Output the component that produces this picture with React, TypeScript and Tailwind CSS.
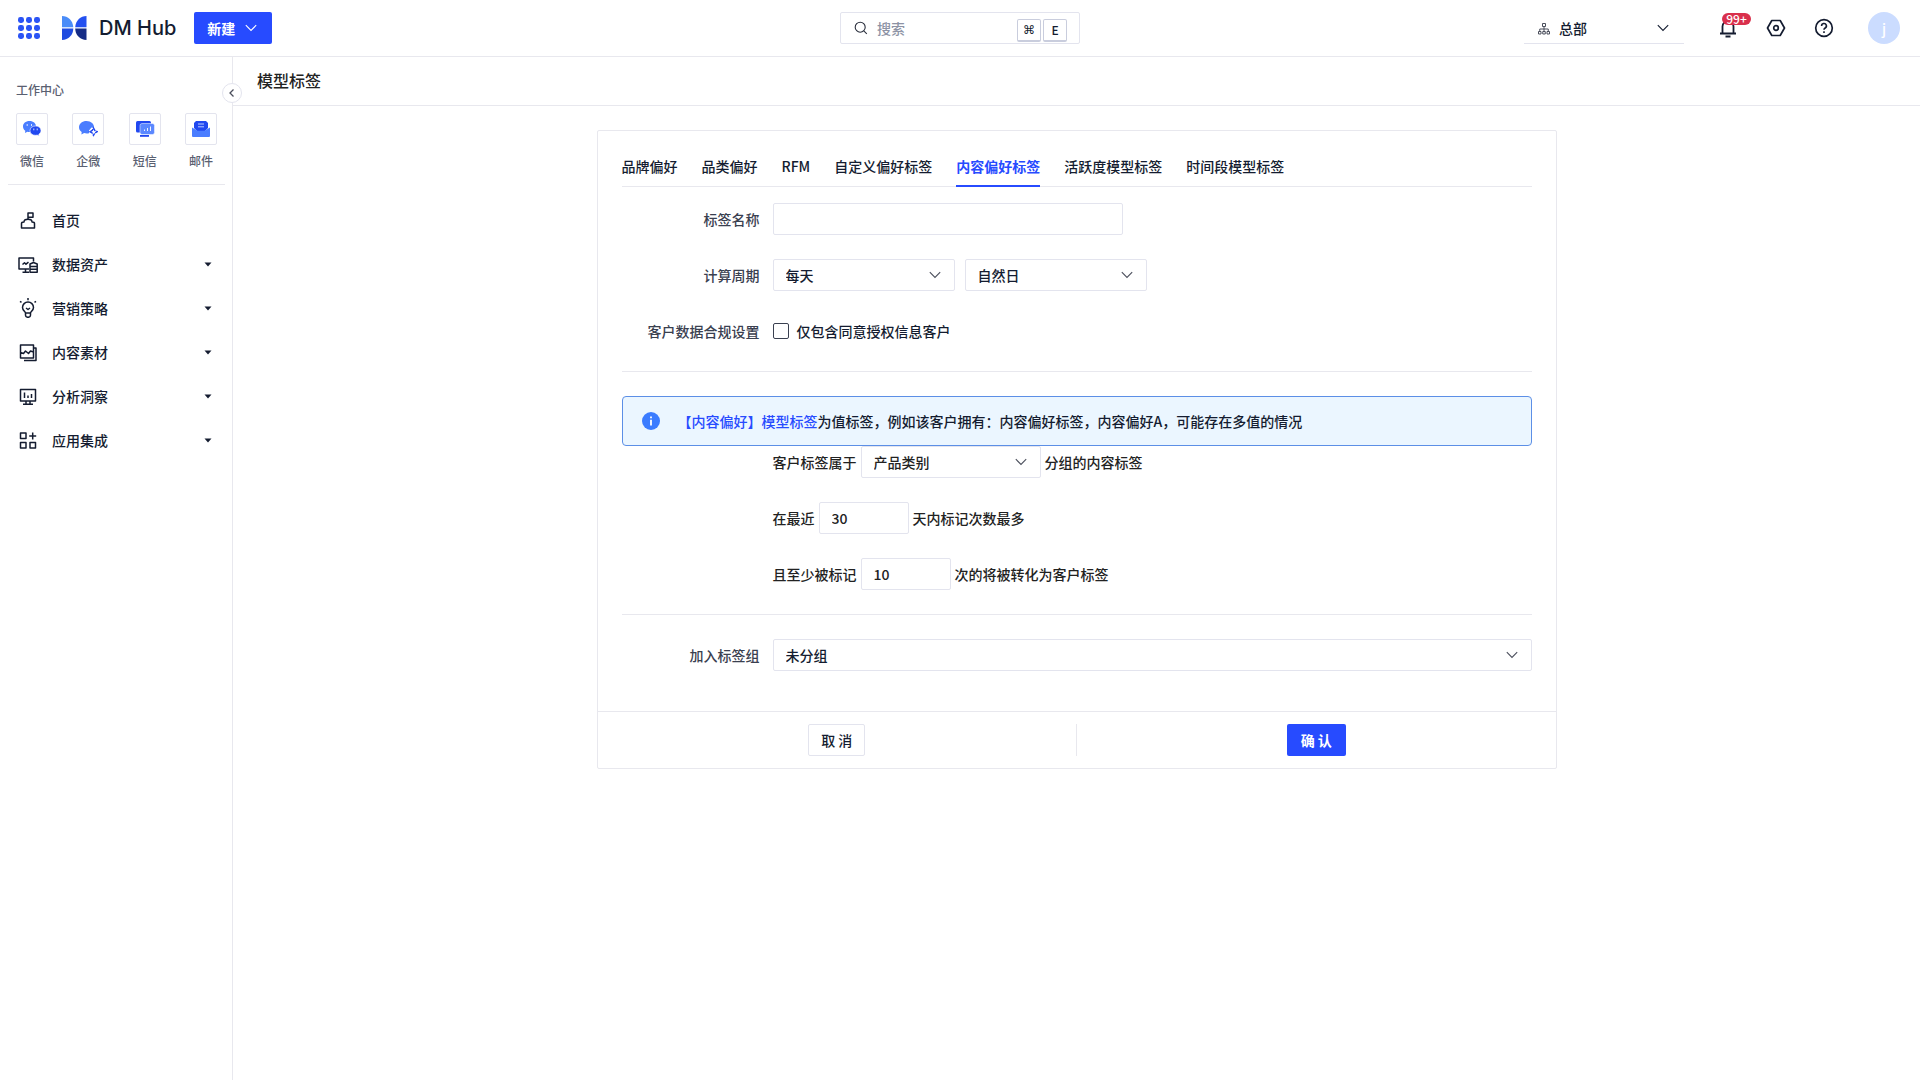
import React, { FC, ReactNode } from 'react';

type IconProps = {
	className?: string;
};

type ChildrenProps = {
	children: ReactNode;
};

type SelectBoxProps = {
	id: string;
	label?: string;
	options: string[];
	className: string;
};

type FormRowProps = {
	label?: string;
	htmlFor?: string;
	children: ReactNode;
};

type NavEntry = {
	label: string;
	icon: ReactNode;
	expandable: boolean;
};

const Chevron: FC<IconProps> = ({ className = '' }) => (
	<svg
		className={className}
		width="12"
		height="12"
		viewBox="0 0 12 12"
		fill="none"
		stroke="currentColor"
		strokeWidth="1.1"
	>
		<path d="M0.8 3.2 6 8.4l5.2-5.2" />
	</svg>
);

const LineIcon: FC<ChildrenProps> = ({ children }) => (
	<svg
		className="shrink-0"
		width="20"
		height="20"
		viewBox="0 0 20 20"
		fill="none"
		stroke="currentColor"
		strokeWidth="1.5"
		strokeLinejoin="round"
	>
		{children}
	</svg>
);

const GridIcon = () => (
	<svg width="24" height="24" viewBox="0 0 24 24" fill="#2b54f5">
		{[4, 12, 20].map((y) =>
			[4, 12, 20].map((x) => (
				<rect
					key={`${x}-${y}`}
					x={x - 3}
					y={y - 3}
					width="6"
					height="6"
					rx="2.4"
				/>
			))
		)}
	</svg>
);

const Logo = () => (
	<svg width="26" height="26" viewBox="0 0 26 26">
		<path d="M1 1C7 1 11.800 5.500 12.300 12.200H1z" fill="#4a8cf8" />
		<path d="M25.500 1C19.500 1 14.700 5.500 14.200 12.200H25.500z" fill="#2350f0" />
		<path d="M1 13.600H12.300C12.300 20 7.500 25 1 25z" fill="#1f4be0" />
		<path d="M25.500 13.600H14.200C14.200 20 19 25 25.500 25z" fill="#152c86" />
	</svg>
);

const navEntries: NavEntry[] = [
	{
		label: '首页',
		expandable: false,
		icon: (
			<>
				<path d="M3.500 18v-4.500c0-1 .8-1.500 2.500-1.500 0-1.800 1.500-2.700 4-2.700s4 .9 4 2.700c1.700 0 2.500.5 2.500 1.500V18z" />
				<path d="M10 9.300V3h5v4.200h-5" />
			</>
		),
	},
	{
		label: '数据资产',
		expandable: true,
		icon: (
			<>
				<path d="M11 15H1V4h14.500v3.500M4.500 18.300H11M7.500 15v3M4.500 10.500l2-1.800 1.500 1.500 2.500-2" />
				<path d="M12 10l3.500-1.500L19.200 10v8.300H12zM12 12.500h7M12 15.300h7" />
			</>
		),
	},
	{
		label: '营销策略',
		expandable: true,
		icon: (
			<>
				<path d="M7.500 15c0-1.500-3-2.500-3-5.500a5.500 5.500 0 0 1 11 0c0 3-3 4-3 5.500zM7.500 15v2.300c0 1.200 1 2 2.500 2s2.500-.8 2.500-2V15" />
				<path d="M8 10l2 1.500L12 10M10 0v2.300M2 3.300l1.500 1M18 3.300l-1.500 1" />
			</>
		),
	},
	{
		label: '内容素材',
		expandable: true,
		icon: (
			<path d="M2.500 3h13v13h-13zM6 18.500h12V6h-2.500M2.500 10.500l3 1L7.500 9l3 2.500 2-2.500 3 1" />
		),
	},
	{
		label: '分析洞察',
		expandable: true,
		icon: (
			<>
				<path d="M2.500 3.500h15V15h-15zM8 15v3M12 15v3M5 18.300h10" />
				<path d="M6.500 6.500V12M10 9.500V12M13.500 8v4" />
			</>
		),
	},
	{
		label: '应用集成',
		expandable: true,
		icon: (
			<>
				<path d="M2.500 3h5.500v5.500H2.500zM2.500 12.500h5.500V18H2.500zM12 12.500h5.500V18H12z" />
				<path d="M14.700 2.500v7M11.200 6h7" />
			</>
		),
	},
];

const shortcuts = [
	{
		label: '微信',
		icon: (
			<>
				<path
					d="M7.500 2C3.600 2 1 4.400 1 7.500c0 1.800.9 3.300 2.300 4.300L3 14l2.400-1.200c3.500 1 8.600-1 8.600-5.300C14 4.400 11.400 2 7.500 2z"
					fill="#4a7dff"
				/>
				<path
					d="M13.500 7c-3.300 0-5.500 2-5.500 4.700s2.200 4.600 5.500 4.600c.6 0 1.200-.1 1.700-.2l2 .9-.4-1.700c1.300-.9 2.200-2.100 2.200-3.600C19 9 16.800 7 13.500 7z"
					fill="#2148f0"
					stroke="#fff"
					strokeWidth=".6"
				/>
				<path
					d="M5.200 5v2M9.500 5v2M11.800 9.500v1.800M15.200 9.500v1.800"
					stroke="#fff"
					strokeWidth=".8"
				/>
			</>
		),
	},
	{
		label: '企微',
		icon: (
			<>
				<path
					d="M8.500 2C4.300 2 1 4.700 1 8.200c0 2 1 3.700 2.700 4.800L3.400 15.500l2.700-1.400c1.600.4 3.300.4 4.900.1v-2.700l2.500-3 2.500.5C16.500 5 13 2 8.500 2z"
					fill="#4a7dff"
				/>
				<path
					d="M15.500 9l1.300 2.400 2.400 1.300-2.400 1.300-1.300 2.400-1.300-2.400-2.400-1.300 2.400-1.300z"
					fill="#fff"
					stroke="#2148f0"
					strokeWidth="1.400"
					strokeDasharray="3.5 .8"
				/>
			</>
		),
	},
	{
		label: '短信',
		icon: (
			<>
				<rect x="1" y="2" width="15" height="11.500" rx="1.500" fill="#2148f0" />
				<path d="M5 16h9v1.800H5z" fill="#2148f0" />
				<rect
					x="5"
					y="4.500"
					width="14.500"
					height="11"
					rx="2"
					fill="#5b88ff"
					stroke="#fff"
					strokeWidth=".5"
				/>
				<path
					d="M9.500 10.500V12M12.500 9V12M15.500 7.500V12"
					stroke="#fff"
					strokeWidth=".9"
				/>
			</>
		),
	},
	{
		label: '邮件',
		icon: (
			<>
				<path d="M5 2h10l2 2v5l-3 3H6L3 9V4z" fill="#2148f0" />
				<path d="M7 5h6M7 7.800h6" stroke="#b9cbff" />
				<path
					d="M1 8.500l5.500 3.300h7L19 8.500V17a1 1 0 0 1-1 1H2a1 1 0 0 1-1-1z"
					fill="#4a7dff"
				/>
			</>
		),
	},
];

const tabs = [
	'品牌偏好',
	'品类偏好',
	'RFM',
	'自定义偏好标签',
	'内容偏好标签',
	'活跃度模型标签',
	'时间段模型标签',
];

const activeTab = '内容偏好标签';

const SelectBox: FC<SelectBoxProps> = ({ id, label, options, className }) => (
	<div className={`relative ${className}`}>
		<select
			id={id}
			aria-label={label}
			className="h-8 w-full appearance-none rounded-xs border border-[#e3e4ee] bg-white px-3 pr-8 font-medium"
		>
			{options.map((option) => (
				<option key={option}>{option}</option>
			))}
		</select>
		<Chevron className="pointer-events-none absolute top-[10px] right-[14px] text-[#4b4f5c]" />
	</div>
);

const FormRow: FC<FormRowProps> = ({ label, htmlFor, children }) => (
	<div className="mb-6 flex h-8 items-center font-medium">
		<div className="w-[138px] shrink-0 text-right text-[#3a4050]">
			{label && <label htmlFor={htmlFor}>{label}</label>}
		</div>
		<div className="ml-[13px] flex min-w-0 flex-1 items-center">{children}</div>
	</div>
);

const Header = () => (
	<header className="flex h-[57px] shrink-0 items-center border-b border-[#e8e8ee]">
		<div className="flex flex-1 items-center pl-[17px]">
			<button type="button" aria-label="应用">
				<GridIcon />
			</button>
			<a href="#" className="ml-5 flex items-center gap-3">
				<Logo />
				<span className="font-['Inter',sans-serif] text-xl font-medium">
					DM Hub
				</span>
			</a>
			<button
				type="button"
				className="ml-[18px] flex h-8 items-center gap-[10px] rounded-xs bg-[#274bff] pr-[15px] pl-[13px] font-bold text-white"
			>
				新建
				<Chevron />
			</button>
		</div>

		<div className="flex h-8 w-60 items-center rounded-xs border border-[#e3e4ee] pr-3 pl-[13px]">
			<svg
				width="14"
				height="14"
				viewBox="0 0 14 14"
				fill="none"
				stroke="#2a2f3d"
				strokeWidth="1.100"
			>
				<circle cx="6.200" cy="6.200" r="5" />
				<path d="M9.800 9.800l3 3" />
			</svg>
			<input
				type="text"
				aria-label="搜索"
				placeholder="搜索"
				className="ml-[9px] min-w-0 flex-1 font-medium outline-none placeholder:text-[#8d93a5]"
			/>
			<div className="flex gap-[2px] pt-1 text-xs font-medium">
				<kbd className="flex h-[23px] w-6 items-center justify-center rounded-xs border border-b-2 border-[#c9cddd] font-['DejaVu_Sans',sans-serif]">
					⌘
				</kbd>
				<kbd className="flex h-[23px] w-6 items-center justify-center rounded-xs border border-b-2 border-[#c9cddd] font-['Noto_Sans_CJK_SC',sans-serif]">
					E
				</kbd>
			</div>
		</div>

		<div className="flex flex-1 items-center justify-end pr-[17px]">
			<div className="relative mr-[34px] w-40">
				<svg
					className="pointer-events-none absolute top-[11px] left-[14px]"
					width="12"
					height="12"
					viewBox="0 0 12 12"
					fill="none"
					stroke="#4b4f5c"
				>
					<path d="M4.500.5h3v3h-3zM.5 8.500h2.500v2.500H.5zM4.750 8.500h2.500v2.500h-2.500zM9 8.500h2.500v2.500H9zM6 3.500v5M1.750 8.500V6h8.500v2.500" />
				</svg>
				<select
					aria-label="组织"
					className="h-8 w-full appearance-none border-b border-[#e3e4ee] bg-white pr-8 pl-[35px] font-medium"
				>
					<option>总部</option>
				</select>
				<Chevron className="pointer-events-none absolute top-[10px] right-[15px]" />
			</div>
			<div className="flex items-center gap-7">
				<button type="button" aria-label="通知" className="relative">
					<LineIcon>
						<path
							d="M4.500 15V8.500a5.500 5.500 0 0 1 11 0V15M2 15.500h16M7.500 18.500h5"
							strokeWidth="1.800"
						/>
					</LineIcon>
					<span className="absolute -top-[5px] left-1 flex h-3 w-[29px] items-center justify-center rounded-full bg-[#d9304c] text-xs font-medium text-white">
						99+
					</span>
				</button>
				<button type="button" aria-label="设置">
					<LineIcon>
						<path
							d="M5.800 2.500h8.400L18.500 10l-4.300 7.500H5.800L1.500 10z"
							strokeWidth="1.700"
						/>
						<circle cx="10" cy="10" r="2.300" strokeWidth="1.700" />
					</LineIcon>
				</button>
				<button type="button" aria-label="帮助">
					<LineIcon>
						<circle cx="10" cy="10" r="8.300" strokeWidth="1.700" />
						<path
							d="M7.600 8a2.400 2.400 0 1 1 3.600 2c-.8.500-1.200.8-1.200 1.700M10 13.200v1.700"
							strokeWidth="1.600"
						/>
					</LineIcon>
				</button>
			</div>
			<div className="mr-[3px] ml-[34px] flex size-8 items-center justify-center rounded-full bg-[#cbdcff] font-medium text-white">
				j
			</div>
		</div>
	</header>
);

const Sidebar = () => (
	<aside className="relative w-[233px] shrink-0 border-r border-[#e8e8ee] pt-[23px] pr-[7px] pl-2">
		<button
			type="button"
			aria-label="收起"
			className="absolute top-[26px] -right-[10px] flex size-5 items-center justify-center rounded-full border border-[#e3e4ee] bg-white text-[#4b4f5c]"
		>
			<svg
				width="8"
				height="8"
				viewBox="0 0 8 8"
				fill="none"
				stroke="currentColor"
				strokeWidth="1.300"
			>
				<path d="M5.500.5 2 4l3.500 3.500" />
			</svg>
		</button>
		<h2 className="pl-2 text-xs leading-5 font-medium text-[#5a6071]">
			工作中心
		</h2>
		<div className="mt-[13px] flex justify-between border-b border-[#e8e8ee] px-2 pb-[14px]">
			{shortcuts.map(({ label, icon }) => (
				<a
					key={label}
					href="#"
					className="flex flex-col items-center gap-[7px] text-xs leading-[18px] font-medium text-[#5a6071]"
				>
					<span className="flex size-8 items-center justify-center rounded-xs border border-[#e3e4ee]">
						<svg width="20" height="20" viewBox="0 0 20 20" fill="none">
							{icon}
						</svg>
					</span>
					{label}
				</a>
			))}
		</div>
		<nav className="mt-[13px]">
			{navEntries.map(({ label, icon, expandable }) => (
				<a
					key={label}
					href="#"
					className="flex h-11 items-center gap-[14px] pr-[13px] pl-[10px] font-medium"
				>
					<LineIcon>{icon}</LineIcon>
					<span className="flex-1">{label}</span>
					{expandable && (
						<svg width="8" height="6" viewBox="0 0 8 6" fill="currentColor">
							<path d="M.5 1.500h7L4 5.500z" />
						</svg>
					)}
				</a>
			))}
		</nav>
	</aside>
);

const TagForm = () => (
	<form className="mx-auto mt-6 w-full max-w-[960px] rounded-xs border border-[#e8e8ee]">
		<div className="px-6">
			<div
				role="tablist"
				className="flex gap-6 border-b border-[#e8e8ee] pt-4"
			>
				{tabs.map((tab) => (
					<button
						key={tab}
						type="button"
						role="tab"
						aria-selected={tab === activeTab}
						className={
							tab === activeTab
								? '-mb-px h-10 border-b-2 border-[#274bff] font-bold text-[#274bff]'
								: '-mb-px h-10 border-b-2 border-transparent font-medium'
						}
					>
						{tab}
					</button>
				))}
			</div>

			<div className="mt-4 border-b border-[#e8e8ee]">
				<FormRow label="标签名称" htmlFor="tag-name">
					<input
						id="tag-name"
						type="text"
						className="h-8 w-[350px] rounded-xs border border-[#e3e4ee] px-3"
					/>
				</FormRow>
				<FormRow label="计算周期" htmlFor="period">
					<SelectBox id="period" options={['每天']} className="w-[182px]" />
					<SelectBox
						id="day-type"
						label="日期类型"
						options={['自然日']}
						className="ml-[10px] w-[182px]"
					/>
				</FormRow>
				<FormRow label="客户数据合规设置" htmlFor="consent">
					<input
						id="consent"
						type="checkbox"
						className="size-4 appearance-none rounded-xs border border-[#3a4050]"
					/>
					<label htmlFor="consent" className="ml-2">
						仅包含同意授权信息客户
					</label>
				</FormRow>
			</div>

			<div className="mt-6 flex h-[50px] items-center gap-[18px] rounded-sm border border-[#5c8fe6] bg-[#ebf6ff] pl-[19px]">
				<svg width="18" height="18" viewBox="0 0 18 18">
					<circle cx="9" cy="9" r="9" fill="#3b7cff" />
					<path d="M9 4.500v1.800M9 7.800v5.700" stroke="#fff" strokeWidth="1.800" />
				</svg>
				<p className="font-medium">
					<span className="text-[#274bff]">【内容偏好】模型标签</span>
					为值标签，例如该客户拥有：内容偏好标签，内容偏好A，可能存在多值的情况
				</p>
			</div>

			<div className="border-b border-[#e8e8ee] text-[#222]">
				<FormRow>
					<label htmlFor="category">客户标签属于</label>
					<SelectBox
						id="category"
						options={['产品类别']}
						className="mx-1 w-[180px]"
					/>
					<span>分组的内容标签</span>
				</FormRow>
				<FormRow>
					<label htmlFor="recent-days">在最近</label>
					<input
						id="recent-days"
						type="text"
						defaultValue="30"
						className="mx-1 h-8 w-[90px] rounded-xs border border-[#e3e4ee] px-3"
					/>
					<span>天内标记次数最多</span>
				</FormRow>
				<FormRow>
					<label htmlFor="min-count">且至少被标记</label>
					<input
						id="min-count"
						type="text"
						defaultValue="10"
						className="mx-1 h-8 w-[90px] rounded-xs border border-[#e3e4ee] px-3"
					/>
					<span>次的将被转化为客户标签</span>
				</FormRow>
			</div>

			<div className="mt-6 pb-4">
				<FormRow label="加入标签组" htmlFor="tag-group">
					<SelectBox id="tag-group" options={['未分组']} className="w-full" />
				</FormRow>
			</div>
		</div>

		<div className="flex divide-x divide-[#e8e8ee] border-t border-[#e8e8ee] py-3">
			<div className="flex flex-1 justify-center">
				<button
					type="button"
					className="h-8 rounded-xs border border-[#e3e4ee] px-3 font-medium"
				>
					取 消
				</button>
			</div>
			<div className="flex flex-1 justify-center">
				<button
					type="submit"
					className="h-8 rounded-xs bg-[#274bff] px-[14px] font-bold text-white"
				>
					确 认
				</button>
			</div>
		</div>
	</form>
);

const App = () => (
	<div className="flex min-h-screen flex-col bg-white font-['Noto_Sans_CJK_SC',sans-serif] text-sm text-[#141c30]">
		<Header />
		<div className="flex flex-1">
			<Sidebar />
			<main className="min-w-0 flex-1">
				<h1 className="flex h-[49px] items-center border-b border-[#e8e8ee] pb-[3px] pl-6 text-base font-medium text-[#222]">
					模型标签
				</h1>
				<TagForm />
			</main>
		</div>
	</div>
);

export default App;
